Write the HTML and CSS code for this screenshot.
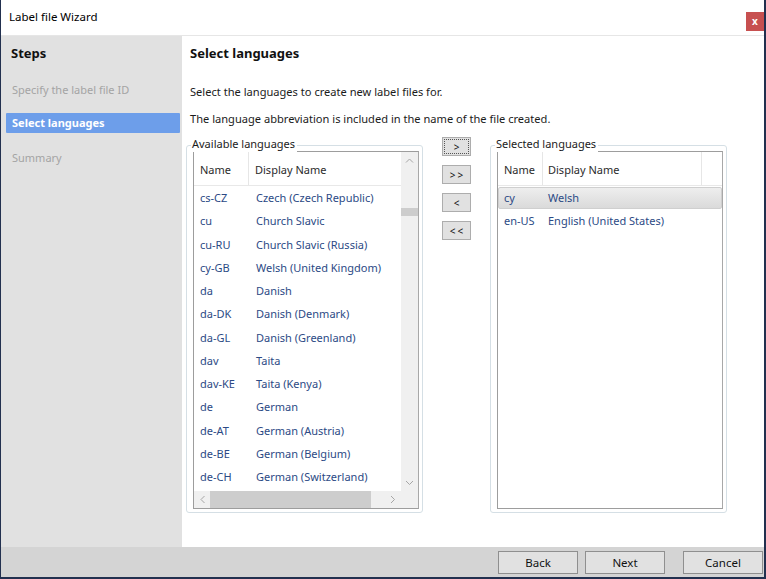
FILE: index.html
```html
<!DOCTYPE html>
<html>
<head>
<meta charset="utf-8">
<link rel="stylesheet" href="styles.css">
</head>
<body>
<div class="window">
  <div class="titlebar">
    <span class="title">Label file Wizard</span>
    <div class="close">x</div>
  </div>
  <div class="body">
    <aside class="sidebar">
      <div class="steps">Steps</div>
      <div class="step step-1 disabled">Specify the label file ID</div>
      <div class="step step-2 active">Select languages</div>
      <div class="step step-3 disabled">Summary</div>
    </aside>
    <main class="main">
      <h1 class="heading">Select languages</h1>
      <p class="para p1">Select the languages to create new label files for.</p>
      <p class="para p2">The language abbreviation is included in the name of the file created.</p>
      <div class="panes">
        <div class="group">
          <span class="legend">Available languages</span>
          <div class="list">
            <div class="list-content">
              <div class="header">
                <div class="hcol c1">Name</div>
                <div class="hcol c2">Display Name</div>
              </div>
              <div class="row"><span class="c1">cs-CZ</span><span class="c2">Czech (Czech Republic)</span></div>
              <div class="row"><span class="c1">cu</span><span class="c2">Church Slavic</span></div>
              <div class="row"><span class="c1">cu-RU</span><span class="c2">Church Slavic (Russia)</span></div>
              <div class="row"><span class="c1">cy-GB</span><span class="c2">Welsh (United Kingdom)</span></div>
              <div class="row"><span class="c1">da</span><span class="c2">Danish</span></div>
              <div class="row"><span class="c1">da-DK</span><span class="c2">Danish (Denmark)</span></div>
              <div class="row"><span class="c1">da-GL</span><span class="c2">Danish (Greenland)</span></div>
              <div class="row"><span class="c1">dav</span><span class="c2">Taita</span></div>
              <div class="row"><span class="c1">dav-KE</span><span class="c2">Taita (Kenya)</span></div>
              <div class="row"><span class="c1">de</span><span class="c2">German</span></div>
              <div class="row"><span class="c1">de-AT</span><span class="c2">German (Austria)</span></div>
              <div class="row"><span class="c1">de-BE</span><span class="c2">German (Belgium)</span></div>
              <div class="row"><span class="c1">de-CH</span><span class="c2">German (Switzerland)</span></div>
            </div>
            <div class="vscroll">
              <svg class="arrow" width="17" height="17" viewBox="0 0 17 17"><polyline points="5,10.5 8.5,7 12,10.5" fill="none" stroke="#a6a6a6" stroke-width="1"/></svg>
              <div class="vtrack"><div class="vthumb"></div></div>
              <svg class="arrow" width="17" height="17" viewBox="0 0 17 17"><polyline points="5,7 8.5,10.5 12,7" fill="none" stroke="#a6a6a6" stroke-width="1"/></svg>
            </div>
            <div class="hscroll">
              <svg class="arrow" width="17" height="17" viewBox="0 0 17 17"><polyline points="10.5,5 7,8.5 10.5,12" fill="none" stroke="#a6a6a6" stroke-width="1"/></svg>
              <div class="htrack"><div class="hthumb"></div></div>
              <svg class="arrow" width="17" height="17" viewBox="0 0 17 17"><polyline points="7,5 10.5,8.5 7,12" fill="none" stroke="#a6a6a6" stroke-width="1"/></svg>
            </div>
            <div class="corner"></div>
          </div>
        </div>
        <div class="movers">
          <div class="mover focused"><span>&gt;</span></div>
          <div class="mover"><span>&gt;&gt;</span></div>
          <div class="mover"><span>&lt;</span></div>
          <div class="mover"><span>&lt;&lt;</span></div>
        </div>
        <div class="group">
          <span class="legend">Selected languages</span>
          <div class="list list-selected">
            <div class="header">
              <div class="hcol s1">Name</div>
              <div class="hcol s2">Display Name</div>
            </div>
            <div class="row selected"><span class="s1">cy</span><span class="s2">Welsh</span></div>
            <div class="row"><span class="s1">en-US</span><span class="s2">English (United States)</span></div>
          </div>
        </div>
      </div>
    </main>
  </div>
  <div class="footer">
    <div class="btn">Back</div>
    <div class="btn next">Next</div>
    <div class="btn cancel">Cancel</div>
  </div>
</div>
</body>
</html>
```

FILE: styles.css
```css
* { box-sizing: border-box; }
html, body { margin: 0; padding: 0; background: #ffffff; }
body {
  font-family: "Noto Sans", "DejaVu Sans", sans-serif;
  font-size: 11px;
  color: #1b1b1b;
}
.window {
  width: 766px;
  height: 579px;
  border-left: 1px solid #22304f;
  border-right: 2px solid #22304f;
  border-bottom: 2px solid #22304f;
  display: flex;
  flex-direction: column;
  background: #ffffff;
}
.titlebar {
  height: 36px;
  border-bottom: 1px solid #e6e6e6;
  display: flex;
  justify-content: space-between;
  align-items: flex-start;
}
.title {
  margin-top: 9px;
  margin-left: 8px;
  font-size: 11.5px;
  line-height: 16px;
  color: #000;
}
.close {
  margin-top: 12px;
  width: 18px;
  height: 19px;
  background: #c75050;
  color: #fff;
  font-weight: bold;
  font-size: 10px;
  line-height: 18px;
  text-align: center;
}
.body {
  height: 511px;
  display: flex;
}
.sidebar {
  width: 181px;
  background: #e1e1e1;
  display: flex;
  flex-direction: column;
}
.steps {
  margin-top: 7px;
  margin-left: 10px;
  font-size: 13px;
  font-weight: bold;
  line-height: 20px;
  color: #111;
}
.step {
  height: 20px;
  line-height: 20px;
  padding-left: 6px;
  margin-left: 5px;
  margin-right: 2px;
}
.step-1 { margin-top: 17px; }
.step-2 { margin-top: 13px; }
.step-3 { margin-top: 15px; }
.disabled { color: #a4a4a4; }
.active {
  background: #6d9eea;
  color: #fff;
  font-weight: bold;
  border-radius: 1px;
}
.main {
  flex: 1;
  display: flex;
  flex-direction: column;
}
.heading {
  margin: 7px 0 0 8px;
  font-size: 13px;
  line-height: 20px;
  font-weight: bold;
  color: #111;
}
.para {
  margin: 0 0 0 8px;
  line-height: 16px;
  font-size: 11.1px;
}
.p1 { margin-top: 21px; }
.p2 { margin-top: 11px; }
.panes {
  margin-top: 10px;
  margin-left: 4px;
  display: flex;
  align-items: flex-start;
  gap: 19px;
}
.group {
  position: relative;
  margin-top: 8px;
  width: 237px;
  height: 368px;
  border: 1px solid #d5dfe5;
  border-radius: 3px;
  padding: 5px 3px 3px 6px;
}
.legend {
  position: absolute;
  top: -10px;
  left: 4px;
  padding: 0 2px 0 1px;
  background: #fff;
  line-height: 16px;
  color: #1b1b1b;
}
.list {
  width: 226px;
  height: 358px;
  border: 1px solid #9d9d9d;
  border-right-color: #a8a8a8;
  display: grid;
  grid-template-columns: 1fr 17px;
  grid-template-rows: 1fr 17px;
  overflow: hidden;
}
.list-content {
  overflow: hidden;
}
.header {
  height: 34px;
  display: flex;
  border-bottom: 1px solid #e8e8e8;
  color: #2b2b2b;
}
.hcol {
  line-height: 35px;
  padding-left: 6px;
}
.hcol.c1 { width: 55px; border-right: 1px solid #e6e6e6; }
.hcol.c2 { flex: 1; }
.row {
  height: 23.25px;
  line-height: 23px;
  display: flex;
  color: #2c4a85;
  white-space: nowrap;
}
.row .c1 { width: 56px; padding-left: 6px; flex: none; }
.row .c2 { padding-left: 6px; }
.vscroll {
  background: #f0f0f0;
  display: flex;
  flex-direction: column;
}
.vtrack { flex: 1; position: relative; }
.vthumb {
  margin-top: 39px;
  height: 8px;
  background: #cdcdcd;
}
.hscroll {
  background: #f0f0f0;
  display: flex;
}
.htrack { flex: 1; display: flex; align-items: stretch; }
.hthumb {
  margin-left: -1px;
  width: 161px;
  background: #cdcdcd;
}
.arrow { display: block; flex: none; }
.corner { background: #f0f0f0; }
.list-selected {
  display: block;
}
.hcol.s1 { width: 45px; border-right: 1px solid #e6e6e6; }
.hcol.s2 { width: 159px; border-right: 1px solid #e6e6e6; padding-left: 5px; }
.row .s1 { width: 45px; padding-left: 6px; flex: none; }
.row .s2 { padding-left: 5px; }
.row.selected {
  height: 22px;
  margin-top: 1px;
  margin-bottom: 0.25px;
  line-height: 20px;
  border: 1px solid #cfcfcf;
  border-radius: 2px;
  background: linear-gradient(#eeeeee, #dadada);
}
.row.selected .s1 { padding-left: 5px; width: 44px; }
.movers {
  width: 29px;
  display: flex;
  flex-direction: column;
  gap: 9px;
  margin-top: 0px;
}
.mover {
  height: 19px;
  background: #e1e1e1;
  border: 1px solid #adadad;
  display: flex;
  align-items: center;
  justify-content: center;
  font-size: 10px;
  color: #111;
  letter-spacing: 2px;
  padding-left: 2px;
  padding-top: 1px;
}
.mover.focused {
  outline: 1px dotted #555;
  outline-offset: -3px;
}
.footer {
  height: 30px;
  background: #d4d4d4;
  display: flex;
  justify-content: flex-end;
  align-items: flex-start;
  padding-top: 4px;
  padding-right: 1px;
}
.btn {
  width: 80px;
  height: 23px;
  background: #e1e1e1;
  border: 1px solid #8f8f8f;
  text-align: center;
  line-height: 21px;
  font-size: 11.5px;
  color: #111;
}
.next { margin-left: 7px; }
.cancel { margin-left: 18px; }
```
